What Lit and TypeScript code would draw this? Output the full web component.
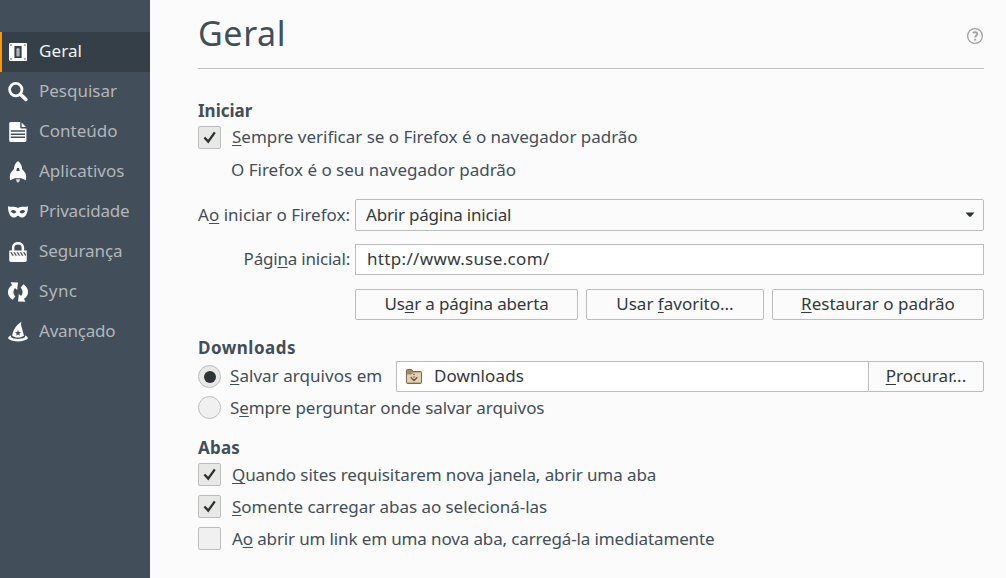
import { LitElement, html, css, svg } from "lit";
import { customElement, property } from "lit/decorators.js";
import { classMap } from "lit/directives/class-map.js";

const icons: Record<string, unknown> = {
  general: svg`<path fill-rule="evenodd" d="M2 1H18Q19 1 19 2V18Q19 19 18 19H2Q1 19 1 18V2Q1 1 2 1ZM2.4 2.6V3.8H3.6V2.6ZM16.4 2.6V3.8H17.6V2.6ZM2.4 16.2V17.4H3.6V16.2ZM16.4 16.2V17.4H17.6V16.2ZM6.4 4V16H13.6V4ZM8.6 6.4H11.4V14.2H8.6Z"/><path d="M9.3 7.2H10.7V14.2H9.3Z" fill="#8b9298"/>`,
  search: svg`<circle cx="7.8" cy="7.6" r="6.2" fill="none" stroke="currentColor" stroke-width="2.8"/><path d="M12.6 12.4L17.9 17.5" stroke="currentColor" stroke-width="3.6" stroke-linecap="round"/>`,
  content: svg`<path fill-rule="evenodd" d="M2.5 0H12.2V5.2Q12.2 6.4 13.4 6.4H18.4V18.5Q18.4 20 17 20H2.8Q1.2 20 1.2 18.5V1.5Q1.2 0 2.5 0ZM2.8 8.3V9.7H17V8.3ZM2.8 11.5V12.9H17V11.5ZM2.8 14.6V16H17V14.6Z"/><path d="M13.6 .4L18 5.1H13.6Z"/>`,
  apps: svg`<path fill-rule="evenodd" d="M10-1C13 1 14 4 14.1 7L17 10.5C18.5 12.5 18.3 16 17.9 18.2L13.3 16.2H6.7L2.1 18.2C1.7 16 1.5 12.5 3 10.5L5.9 7C6 4 7 1 10-1ZM8.3 9H11.7L11 6H9Z"/><path d="M8 17.3H12L11.4 19.4 10 20.8 8.6 19.4Z" opacity=".8"/>`,
  privacy: svg`<path fill-rule="evenodd" d="M0 4.3C3.6 5.6 5.5 3.8 10 6C14.5 3.8 16.4 5.6 20 4.3C20 9 18.8 15.5 14 15.5C11.8 15.5 11.2 13.7 10 13.7S8.2 15.5 6 15.5C1.2 15.5 0 9 0 4.3ZM2.9 9.6C4.5 12 7.2 11.9 8.5 10.1C7 7.6 4 7.3 2.9 9.6ZM17.1 9.6C15.5 12 12.8 11.9 11.5 10.1C13 7.6 16 7.3 17.1 9.6Z"/>`,
  security: svg`<path d="M5.1 9V5.8C5.1-.4 14.9-.4 14.9 5.8V9" fill="none" stroke="currentColor" stroke-width="2.5"/><path fill-rule="evenodd" d="M1.2 8.4H18.8V18.2Q18.8 20 17.1 20H2.9Q1.2 20 1.2 18.2ZM2.2 10.2L4.4 13.7H5.8L3.7 10.2ZM5.4 10.2L7.6 13.7H9L6.9 10.2ZM8.6 10.2L10.8 13.7H12.2L10.1 10.2ZM11.8 10.2L14 13.7H15.4L13.3 10.2ZM15 10.2L17.2 13.7H18V12.4L16.5 10.2Z"/>`,
  sync: svg`<path d="M2.6.2L10 .4L9.2 8L6.9 5.9C4.7 8.8 4.9 11.8 7.3 14.6L4.6 17.8C-1.6 13.6-1.4 6.4 4 3.2Z"/><path d="M17.4 19.8L10 19.6L10.8 12L13.1 14.1C15.3 11.2 15.1 8.2 12.7 5.4L15.4 2.2C21.6 6.4 21.4 13.6 16 16.8Z"/>`,
  advanced: svg`<path fill-rule="evenodd" d="M13.4-.2C12.6 2 13.3 4.6 14.2 7L16 13.8C12.5 16.2 7.3 16.2 4.2 13.8C5 8.5 7.5 3.5 13.4-.2ZM10 7.9L9.2 10.1 7 10.3 8.7 11.7 8.1 13.8 10 12.6 11.9 13.8 11.3 11.7 13 10.3 10.8 10.1Z"/><path d="M3.2 13.6C.2 14.4-.2 16.2.4 16.8C4.8 20.3 15.2 20.3 19.6 16.8C20.2 16.2 19.8 14.4 16.8 13.6C18 16 14.5 16.9 10 16.9S2 16 3.2 13.6Z"/>`,
};

const categories = [
  { icon: "general", label: "Geral", cls: "n0" },
  { icon: "search", label: "Pesquisar", cls: "n1" },
  { icon: "content", label: "Conteúdo", cls: "n2" },
  { icon: "apps", label: "Aplicativos", cls: "n3" },
  { icon: "privacy", label: "Privacidade", cls: "n4" },
  { icon: "security", label: "Segurança", cls: "n5" },
  { icon: "sync", label: "Sync", cls: "n6" },
  { icon: "advanced", label: "Avançado", cls: "n7" },
];

@customElement("pref-toggle")
class PrefToggle extends LitElement {
  @property() kind = "checkbox";
  @property({ type: Boolean }) on = false;

  static styles = css`
    :host { display: block; flex: none; width: 23px; height: 23px; }
    .box {
      box-sizing: border-box; width: 23px; height: 23px;
      border: 1px solid #bcbebe; border-radius: 2px; background: #f0f0f0;
      display: grid; place-items: center;
    }
    .on { background: #e8e8e7; }
    .radio { border-radius: 50%; }
    .dot { width: 12px; height: 12px; border-radius: 50%; background: #2e3436; }
    svg { display: block; }
  `;

  render() {
    const radio = this.kind === "radio";
    return html`<div class=${classMap({ box: true, radio, on: this.on })}>
      ${this.on
        ? radio
          ? html`<div class="dot"></div>`
          : html`<svg width="21" height="21" viewBox="0 0 21 21"><path d="M5.4 10.5L9.2 14.6L15.8 5.3" fill="none" stroke="#2b3032" stroke-width="2.3"/></svg>`
        : null}
    </div>`;
  }
}

@customElement("app-root")
class AppRoot extends LitElement {
  static styles = css`
    :host {
      display: flex; width: 1006px; height: 578px; overflow: hidden;
      background: #fbfbfb; color: #424f5a;
      font: 17px/23px "Noto Sans", sans-serif;
      white-space: nowrap;
    }
    * { box-sizing: border-box; }
    nav {
      flex: none; width: 150px; padding-top: 32px;
      background: #424f5a; color: #b3b6b8;
    }
    .cat {
      display: flex; align-items: center; gap: 11px; height: 40px;
      padding-left: 8px; line-height: 38px;
    }
    .cat svg { flex: none; width: 20px; height: 20px; color: #fbfbfb; fill: currentColor; overflow: visible; }
    .cat span { height: 40px; }
    .active { border-left: 2px solid #ff9500; padding-left: 6px; background: #343f48; color: #f2f2f2; }
    main { flex: none; width: 834px; padding-left: 48px; }
    header {
      display: flex; justify-content: space-between; height: 69px;
      border-bottom: 1px solid #c1c1c1;
    }
    h1 { margin: 0; font-size: 34px; font-weight: 400; line-height: 67px; letter-spacing: 0.6px; }
    .help { width: 18px; height: 18px; margin-top: 27px; }
    h2 { margin: 0; font-size: 17px; font-weight: 700; line-height: 26px; height: 28px; }
    .start { padding-top: 29px; height: 265px; }
    .row { display: flex; height: 23px; gap: 11px; }
    .row + .row { margin-top: 9px; }
    .text { line-height: 22px; }
    .note { margin: 10px 0 17px 33px; height: 23px; line-height: 22px; }
    .form { display: grid; grid-template-columns: 153px 629px; column-gap: 4px; row-gap: 13px; grid-template-rows: 32px 32px 31px; }
    .caption { text-align: right; line-height: 30px; padding-right: 1px; }
    .caption:first-child { line-height: 32px; }
    .field {
      border: 1px solid #bcbebe; border-radius: 2px; color: #33393b;
      line-height: 29px; padding-left: 10px;
    }
    .select { display: flex; justify-content: space-between; padding-right: 8px; line-height: 30px; }
    .select svg { margin-top: 12px; }
    .input { height: 31px; border-radius: 0; background: #fff; padding-left: 11px; line-height: 28px; }
    .buttons { display: grid; grid-template-columns: 223px 178px 212px; gap: 8px; height: 31px; }
    .button { padding: 0; text-align: center; line-height: 27px; }
    .downloads { height: 100px; }
    .downloads .row { gap: 9px; }
    .save { height: 31px; }
    .downloads .save pref-toggle { margin-top: 4px; }
    .downloads .save > .text { line-height: 29px; width: 157px; }
    .downloads .save + .row { margin-top: 4px; }
    .downloads .save + .row .text { line-height: 24px; }
    .target { display: grid; grid-template-columns: 472px 116px; height: 31px; }
    .target .path { display: flex; gap: 11px; border-right: 0; border-radius: 2px 0 0 2px; background: #fff; padding-left: 8px; line-height: 28px; }
    .path svg { margin-top: 6px; }
    .target .button { border-radius: 0 2px 2px 0; }
    .downloads h2 { height: 27px; line-height: 28px; letter-spacing: 0.5px; }
    .tabs h2 { height: 29px; line-height: 28px; letter-spacing: 0.2px; }
    .tabs .text { line-height: 24px; }
    u { text-decoration: underline; text-decoration-thickness: 1px; text-underline-offset: 2px; text-decoration-skip-ink: none; }

    .n0 { letter-spacing: 0.1px; }
    .n4 { letter-spacing: -0.18px; }
    .n5 { letter-spacing: -0.1px; }
    .n6 { letter-spacing: 0.45px; }
    .n7 { letter-spacing: -0.2px; }
    .t1 { letter-spacing: -0.02px; }
    .t4 { letter-spacing: -0.2px; }
    .t5 { letter-spacing: -0.2px; }
    .t6 { letter-spacing: 0.33px; }
    .t7 { letter-spacing: -0.15px; }
    .t10 { letter-spacing: 0.05px; }
    .t11 { letter-spacing: 0.1px; }
    .t12 { letter-spacing: 0.05px; }
    .t13 { letter-spacing: -0.07px; }
    .t14 { letter-spacing: -0.09px; }
    .t15 { letter-spacing: -0.04px; }
    .t16 { letter-spacing: -0.135px; }
  `;

  render() {
    return html`
      <nav>
        ${categories.map((c, i) => html`
          <div class=${classMap({ cat: true, active: i === 0 })}>
            <svg viewBox="0 0 20 20">${icons[c.icon]}</svg><span class=${c.cls}>${c.label}</span>
          </div>`)}
      </nav>
      <main>
        <header>
          <h1>Geral</h1>
          <svg class="help" viewBox="0 0 18 18" fill="none" stroke="#a3a3a3">
            <circle cx="9" cy="9" r="7.4" stroke-width="1.3"/>
            <path d="M6.8 6C8.2 4.8 11.2 5 11.2 7C11.2 8.6 9.2 8.6 9.2 10.6" stroke-width="1.9"/>
            <path d="M9.2 11.8V13.6" stroke-width="2"/>
          </svg>
        </header>
        <section class="start">
          <h2>Iniciar</h2>
          <div class="row"><pref-toggle on></pref-toggle><span class="text t1"><u>S</u>empre verificar se o Firefox é o navegador padrão</span></div>
          <div class="note"><span>O Firefox é o seu navegador padrão</span></div>
          <div class="form">
            <div class="caption"><span>A<u>o</u> iniciar o Firefox:</span></div>
            <div class="field select"><span class="t4">Abrir página inicial</span>
              <svg width="10" height="6" viewBox="0 0 10 6"><path d="M.5.5H9.5L5.7 4.8H4.3Z" fill="#2e3436"/></svg></div>
            <div class="caption"><span class="t5">Pági<u>n</u>a inicial:</span></div>
            <div class="field input"><span class="t6">http://www.suse.com/</span></div>
            <div></div>
            <div class="buttons">
              <div class="field button"><span class="t7">Us<u>a</u>r a página aberta</span></div>
              <div class="field button"><span>Usar <u>f</u>avorito...</span></div>
              <div class="field button"><span><u>R</u>estaurar o padrão</span></div>
            </div>
          </div>
        </section>
        <section class="downloads">
          <h2>Downloads</h2>
          <div class="row save">
            <pref-toggle kind="radio" on></pref-toggle><span class="text"><span class="t10"><u>S</u>alvar arquivos em</span></span>
            <div class="target">
              <div class="field path">
                <svg width="18" height="18" viewBox="0 0 18 18"><path d="M1.5 14.5V2.5Q1.5 1.5 2.5 1.5H6.5L8 3.5H15.5Q16.5 3.5 16.5 4.5V14.5Q16.5 15.5 15.5 15.5H2.5Q1.5 15.5 1.5 14.5Z" fill="#a08c67" stroke="#7d6a4c"/><path d="M2 6.5H6.5L8.5 4.5H16V14.5H2Z" fill="#e3d0b0"/><path d="M5.7 9.3L9 12.5L12.3 9.3M9 5.8V7M9 8.2V9.4" fill="none" stroke="#65543b" stroke-width="1.3"/></svg>
                <span class="t11">Downloads</span>
              </div>
              <div class="field button"><span class="t12"><u>P</u>rocurar...</span></div>
            </div>
          </div>
          <div class="row"><pref-toggle kind="radio"></pref-toggle><span class="text t13">S<u>e</u>mpre perguntar onde salvar arquivos</span></div>
        </section>
        <section class="tabs">
          <h2>Abas</h2>
          <div class="row"><pref-toggle on></pref-toggle><span class="text t14"><u>Q</u>uando sites requisitarem nova janela, abrir uma aba</span></div>
          <div class="row"><pref-toggle on></pref-toggle><span class="text t15"><u>S</u>omente carregar abas ao selecioná-las</span></div>
          <div class="row"><pref-toggle></pref-toggle><span class="text t16">A<u>o</u> abrir um link em uma nova aba, carregá-la imediatamente</span></div>
        </section>
      </main>`;
  }
}
